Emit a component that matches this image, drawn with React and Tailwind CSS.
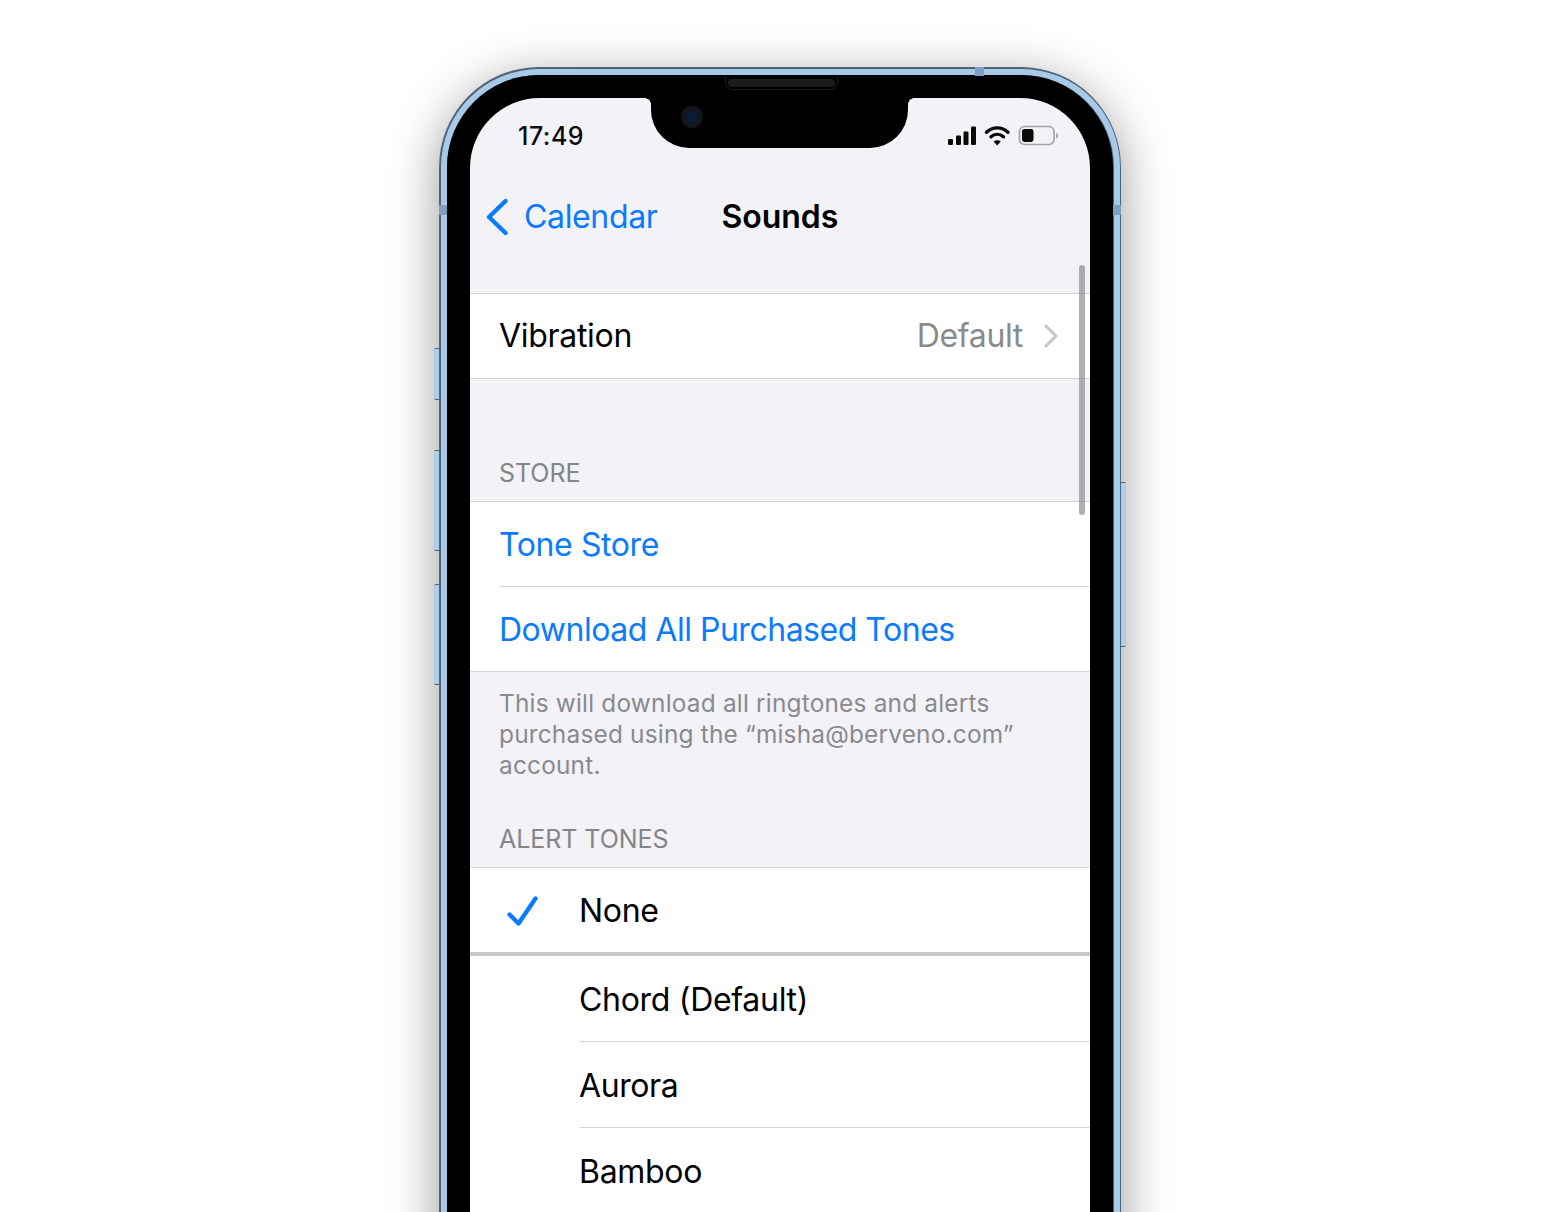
import React from "react";

const font = { fontFamily: "Inter, 'Noto Sans', sans-serif" };

function Row({ children, className = "" }) {
  return <div className={"flex h-[84px] items-center " + className}>{children}</div>;
}

function Header({ children }) {
  return <div className="pl-[29px] text-[25px] leading-[31px] tracking-[-0.05px] text-[#85858a] uppercase">{children}</div>;
}

function StatusIcons() {
  return (
    <svg width="112" height="24" viewBox="0 0 112 24" className="block">
      <g fill="#0a0a0a">
        <rect x="0" y="14" width="5" height="6" rx="1.2" />
        <rect x="8" y="10.5" width="5" height="9.5" rx="1.2" />
        <rect x="15.5" y="6.5" width="5" height="13.5" rx="1.2" />
        <rect x="23" y="1.5" width="5" height="18.5" rx="1.2" />
      </g>
      <g fill="none" stroke="#0a0a0a" strokeWidth="3.4" strokeLinecap="round">
        <path d="M38.5 7.2C44.5 1.4 54 1.4 60 7.2" />
        <path d="M43 11.8C46.7 8.5 51.8 8.5 55.5 11.8" />
      </g>
      <path d="M49.2 20.6L45.6 16.4C47.6 14.8 50.8 14.8 52.8 16.4Z" fill="#0a0a0a" />
      <rect x="71.5" y="1.5" width="34.5" height="18" rx="5" fill="none" stroke="#a3a3a6" strokeWidth="1.6" />
      <rect x="74" y="4" width="11.5" height="13" rx="2.4" fill="#0a0a0a" />
      <path d="M108 8V13.5C109.4 13 110 12 110 10.8 110 9.5 109.4 8.5 108 8Z" fill="#a3a3a6" />
    </svg>
  );
}

export default function App() {
  return (
    <div style={font} className="h-[1212px] w-full overflow-hidden bg-white pt-[67px]">
      <div className="relative mx-auto h-[1300px] w-[682px] rounded-[100px] shadow-[0_12px_50px_rgba(0,0,0,0.4)]">
        {/* side buttons */}
        <div className="absolute left-[-5px] top-[281px] h-[52px] w-[5px] rounded-l-[2px] border-y border-[#4d6278] bg-[#aecfe9]" />
        <div className="absolute left-[-5px] top-[383px] h-[101px] w-[5px] rounded-l-[2px] border-y border-[#4d6278] bg-[#aecfe9]" />
        <div className="absolute left-[-5px] top-[517px] h-[101px] w-[5px] rounded-l-[2px] border-y border-[#4d6278] bg-[#aecfe9]" />
        <div className="absolute right-[-5px] top-[415px] h-[165px] w-[5px] rounded-r-[2px] border-y border-[#4d6278] bg-[#aecfe9]" />

        {/* metal frame */}
        <div className="h-full rounded-[100px] bg-[#4f6379] p-[1.5px]">
          <div className="h-full rounded-[98px] bg-[#a9cae6] p-[6px]">
            <div className="h-full rounded-[92px] bg-[#4d6278] p-[0.5px]">
              <div className="h-full rounded-[92px] bg-black px-[23px] pt-[23px]">
                {/* screen */}
                <div className="relative h-full overflow-hidden rounded-t-[70px] bg-[#f2f2f7]">
                  <div className="flex h-[195px] flex-col">
                    <div className="flex h-[76px] items-start justify-between pl-[48px] pr-[30px] pt-[23px]">
                      <span className="text-[25px] font-medium leading-[31px] tracking-[0.5px] text-[#0a0a0a]">17:49</span>
                      <div className="pt-[4px]">
                        <StatusIcons />
                      </div>
                    </div>
                    <div className="relative mt-[3px] flex h-[80px] items-center">
                      <svg width="24" height="38" viewBox="0 0 24 38" className="ml-[15px]">
                        <path d="M20.5 3L4 19L20.5 35" fill="none" stroke="#0a7aff" strokeWidth="4.4" strokeLinecap="round" strokeLinejoin="round" />
                      </svg>
                      <span className="ml-[15px] text-[32px] leading-[40px] tracking-[-0.35px] text-[#0a7aff]">Calendar</span>
                      <span className="ml-[64px] text-[32px] font-semibold leading-[40px] tracking-[-0.05px] text-black">Sounds</span>
                    </div>
                  </div>

                  <div className="border-y border-[#d4d4d8] bg-white">
                    <Row className="h-[83px] justify-between pl-[29px] pr-[32px]">
                      <span className="text-[32px] tracking-[-0.3px] text-black">Vibration</span>
                      <span className="flex items-center gap-[21px] text-[32px] tracking-[-0.35px] text-[#8a8a8e]">
                        Default
                        <svg width="14" height="24" viewBox="0 0 14 24">
                          <path d="M2 2L12 12L2 22" fill="none" stroke="#c4c4c7" strokeWidth="3" strokeLinecap="round" strokeLinejoin="round" />
                        </svg>
                      </span>
                    </Row>
                  </div>

                  <div className="pt-[79px] pb-[12px]">
                    <Header>Store</Header>
                  </div>
                  <div className="border-y border-[#d4d4d8] bg-white">
                    <Row className="pl-[29px] pt-[2px]">
                      <span className="text-[32px] tracking-[-0.4px] text-[#0a7aff]">Tone Store</span>
                    </Row>
                    <div className="ml-[29px] border-t border-[#dcdcdf]" />
                    <Row className="pl-[29px] pt-[2px]">
                      <span className="text-[32px] tracking-[-0.48px] text-[#0a7aff]">Download All Purchased Tones</span>
                    </Row>
                  </div>

                  <div className="pl-[29px] pr-[30px] pt-[16px] text-[24.4px] leading-[31px] tracking-[0.2px] text-[#8a8a8e]">
                    This will download all ringtones and alerts<br />
                    purchased using the “misha@berveno.com”<br />
                    account.
                  </div>
                  <div className="pt-[43px] pb-[12px]">
                    <Header>Alert Tones</Header>
                  </div>

                  <div className="border-t border-[#d4d4d8] bg-white">
                    <Row className="pl-[35px] pt-[1px]">
                      <svg width="34" height="32" viewBox="0 0 34 32" className="mr-[40px] block">
                        <path d="M4.5 19.5L13.5 28.5L30.5 3.5" fill="none" stroke="#0a7aff" strokeWidth="4.4" strokeLinecap="round" strokeLinejoin="round" />
                      </svg>
                      <span className="text-[32px] tracking-[-0.3px] text-black">None</span>
                    </Row>
                    <div className="border-t-[4px] border-[#c8c8ca]" />
                    <Row className="h-[85px] pl-[109px] pt-[2px]">
                      <span className="text-[32px] tracking-[-0.3px] text-black">Chord (Default)</span>
                    </Row>
                    <div className="ml-[110px] border-t border-[#d4d4d8]" />
                    <Row className="h-[85px] pl-[109px] pt-[2px]">
                      <span className="text-[32px] tracking-[-0.4px] text-black">Aurora</span>
                    </Row>
                    <div className="ml-[110px] border-t border-[#d4d4d8]" />
                    <Row className="h-[85px] pl-[109px] pt-[2px]">
                      <span className="text-[32px] tracking-[-0.3px] text-black">Bamboo</span>
                    </Row>
                  </div>

                  {/* scroll indicator */}
                  <div className="absolute right-[5px] top-[167px] h-[250px] w-[6px] rounded-full bg-[rgba(100,100,104,0.5)]" />
                </div>
              </div>
            </div>
          </div>
        </div>

        {/* antenna bands */}
        <div className="absolute left-[536px] top-0 h-[9px] w-[9px] bg-[#7d9fc4]" />
        <div className="absolute left-0 top-[138px] h-[10px] w-[8px] bg-[#7d9fc4]" />
        <div className="absolute right-0 top-[138px] h-[10px] w-[8px] bg-[#7d9fc4]" />

        {/* notch */}
        <div className="absolute left-[212px] top-[31px] h-[50px] w-[257px] rounded-b-[38px] bg-black">
          <div className="absolute left-[-6px] top-0 h-[6px] w-[6px] bg-[radial-gradient(circle_at_0_100%,transparent_5.5px,black_6px)]" />
          <div className="absolute right-[-6px] top-0 h-[6px] w-[6px] bg-[radial-gradient(circle_at_100%_100%,transparent_5.5px,black_6px)]" />
          <div className="absolute left-[30px] top-[8px] flex h-[22px] w-[22px] items-center justify-center rounded-full bg-[#14161c]">
            <div className="h-[12px] w-[12px] rounded-full bg-[#0b1b3a]" />
          </div>
        </div>
        {/* speaker */}
        <div className="absolute left-[286px] top-[9px] flex h-[14px] w-[113px] items-start justify-center rounded-b-[8px] border border-t-0 border-[#1c1c1e] pt-[3px]">
          <div className="h-[8px] w-[107px] rounded-full bg-[#1b1b1d]" />
        </div>
      </div>
    </div>
  );
}
